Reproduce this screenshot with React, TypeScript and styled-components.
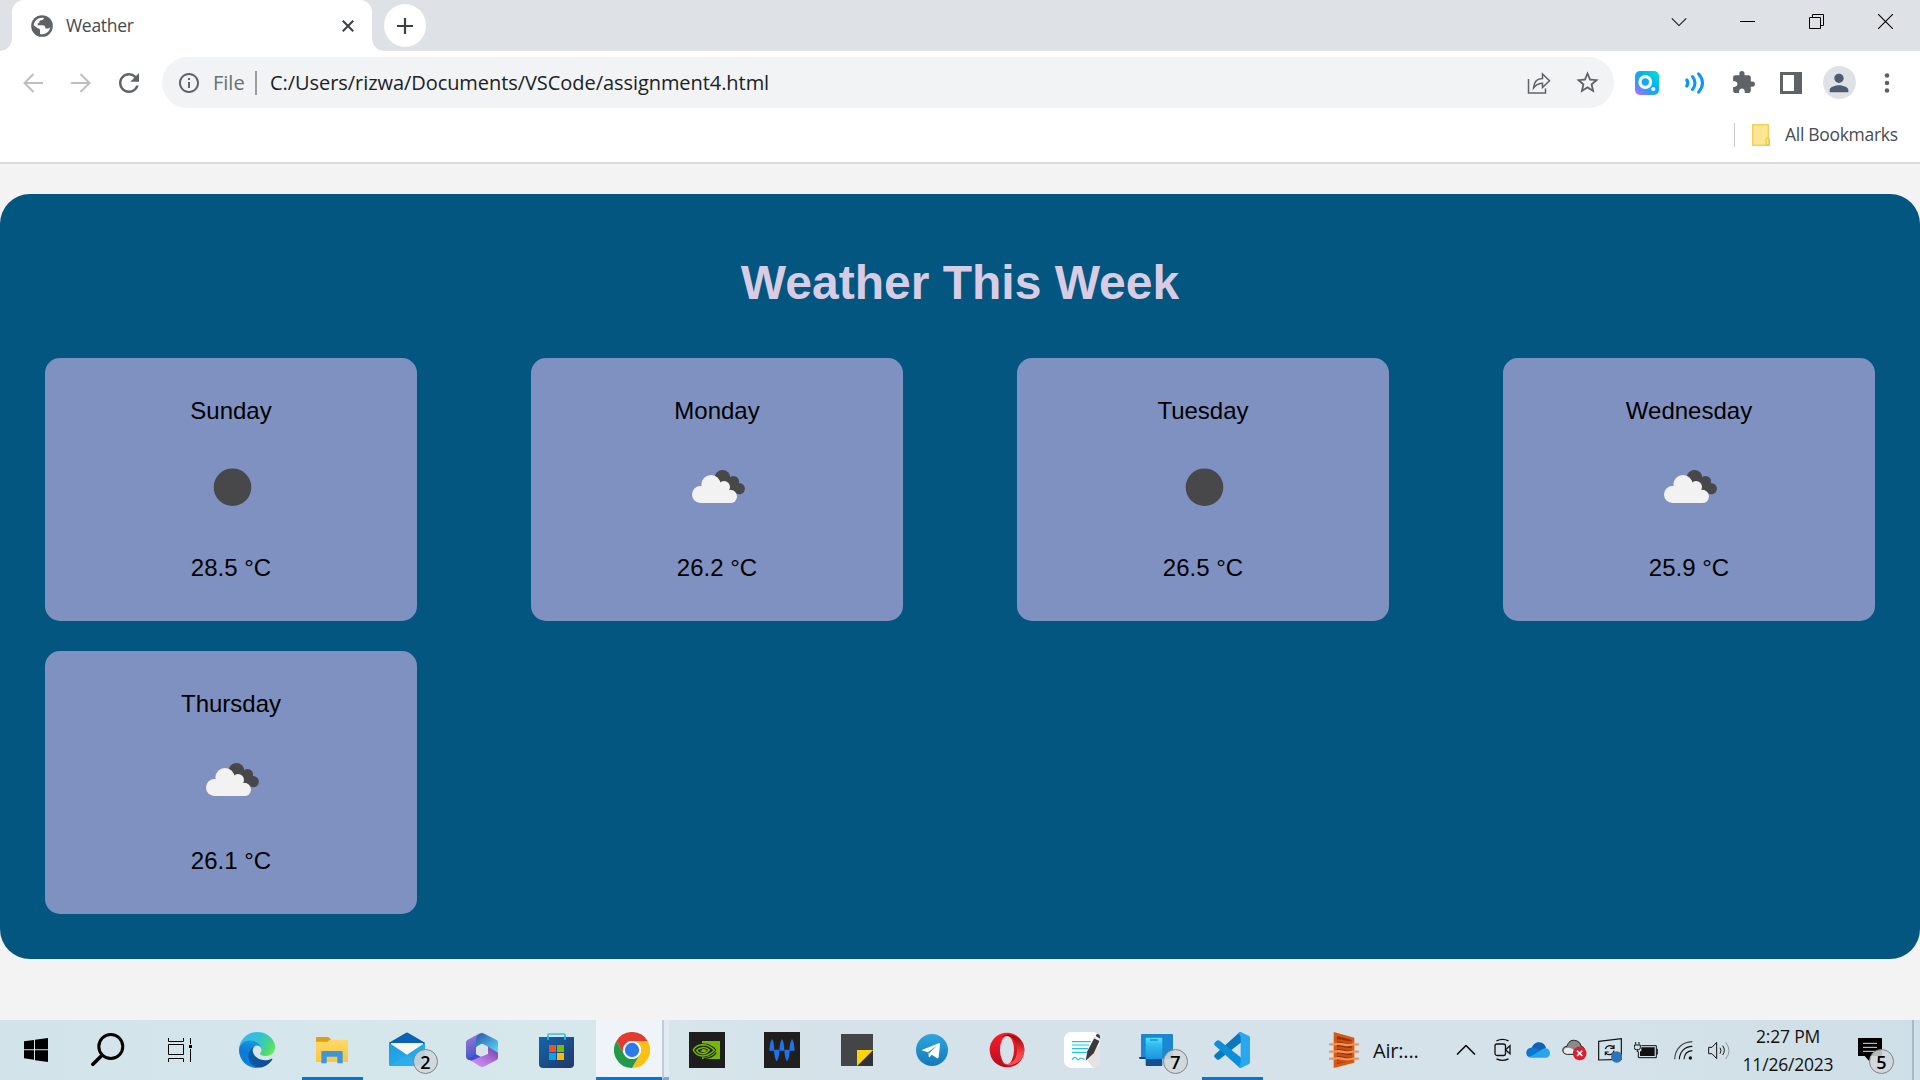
import React from "react";
import styled, { createGlobalStyle } from "styled-components";
import { MdExtension, MdInfoOutline, MdPerson, MdRefresh, MdStarBorder } from "react-icons/md";

const ui = `"Open Sans", "Noto Sans", sans-serif`;

const GlobalStyle = createGlobalStyle`
  *, *::before, *::after { box-sizing: border-box; }
  html, body { margin: 0; padding: 0; }
  body { overflow: hidden; font-family: ${ui}; }
  svg { display: block; flex: none; }
`;

const Screen = styled.div`
  width: 1920px;
  height: 1080px;
  display: flex;
  flex-direction: column;
  background: #f3f3f3;
`;

/* ---------- browser chrome ---------- */

const TabStrip = styled.header`
  height: 51px;
  flex: none;
  display: flex;
  align-items: flex-start;
  padding-left: 12px;
  background: #dee1e6;
`;

const Tab = styled.div`
  position: relative;
  width: 360px;
  height: 51px;
  display: flex;
  align-items: center;
  padding: 0 18px 0 19px;
  border-radius: 12px 12px 0 0;
  background: #fff;
  color: #45494d;

  &::before,
  &::after {
    content: "";
    position: absolute;
    bottom: 0;
    width: 12px;
    height: 12px;
  }
  &::before {
    left: -12px;
    background: radial-gradient(circle at 0 0, #dee1e6 11.5px, #fff 12px);
  }
  &::after {
    right: -12px;
    background: radial-gradient(circle at 100% 0, #dee1e6 11.5px, #fff 12px);
  }
`;

const TabTitle = styled.span`
  flex: 1;
  margin-left: 13px;
  padding-bottom: 2px;
  font-size: 17.5px;
  line-height: 24px;
  letter-spacing: -0.3px;
`;

const NewTab = styled.div`
  width: 42px;
  height: 43px;
  margin: 4px 0 0 12px;
  display: grid;
  place-items: center;
  border-radius: 50%;
  background: #fff;
`;

const WindowControls = styled.div`
  height: 43px;
  margin-left: auto;
  display: flex;
`;

const ControlCell = styled.div`
  width: 69px;
  display: grid;
  place-items: center;
`;

const Toolbar = styled.div`
  height: 63px;
  flex: none;
  display: flex;
  align-items: center;
  padding: 0 9px;
  background: #fff;
`;

const ToolCell = styled.div`
  width: 48px;
  height: 48px;
  display: grid;
  place-items: center;
  color: #5f6368;
`;

const Omnibox = styled.div`
  width: 1452px;
  height: 51px;
  margin: 0 9px;
  display: flex;
  align-items: center;
  padding: 0 3px 0 15px;
  border-radius: 26px;
  background: #f1f3f4;
  color: #5f6368;
`;

const Scheme = styled.span`
  width: 42px;
  margin-left: 12px;
  font-size: 20px;
  line-height: 28px;
  color: #6b6f73;
`;

const SchemeRule = styled.span`
  width: 2px;
  height: 24px;
  background: #9a9da1;
`;

const Url = styled.span`
  flex: 1;
  margin-left: 13px;
  font-size: 20px;
  line-height: 28px;
  letter-spacing: -0.06px;
  white-space: nowrap;
  color: #202124;
`;

const Avatar = styled.div`
  width: 33px;
  height: 33px;
  display: grid;
  place-items: center;
  border-radius: 50%;
  background: #dee1e6;
  color: #4f5b6e;
`;

const BookmarksBar = styled.div`
  height: 50px;
  flex: none;
  display: flex;
  justify-content: flex-end;
  align-items: center;
  padding: 0 21px 6px 0;
  border-bottom: 2px solid #d9dadb;
  background: #fff;
`;

const BookmarkRule = styled.span`
  width: 1px;
  height: 24px;
  margin-right: 17px;
  background: #c6c8ca;
`;

const BookmarkLabel = styled.span`
  width: 114px;
  margin-left: 15px;
  padding-bottom: 2px;
  font-size: 17.5px;
  line-height: 24px;
  letter-spacing: -0.3px;
  white-space: nowrap;
  color: #484c50;
`;

/* ---------- weather page ---------- */

const Page = styled.main`
  flex: 1;
  min-height: 0;
  padding-top: 30px;
  font-family: "Liberation Sans", Arial, sans-serif;
`;

const Forecast = styled.section`
  height: 765px;
  padding: 61px 45px 0;
  border-radius: 30px;
  background: #025680;
`;

const Title = styled.h1`
  margin: 0 0 48px;
  font-size: 48px;
  line-height: 55px;
  text-align: center;
  color: #d8cce4;
`;

const Days = styled.div`
  display: grid;
  grid-template-columns: repeat(4, 372px);
  justify-content: space-between;
  row-gap: 30px;
`;

const DayCard = styled.article`
  height: 263px;
  display: flex;
  flex-direction: column;
  align-items: center;
  padding-top: 39px;
  border-radius: 15px;
  background: #7f91c1;
  color: #000;
`;

const CardText = styled.p`
  margin: 0;
  font-size: 24px;
  line-height: 27px;
`;

const Sky = styled.div`
  width: 75px;
  height: 75px;
  margin: 26px 0 29px;
`;

/* ---------- taskbar ---------- */

const TaskbarRoot = styled.footer`
  height: 60px;
  flex: none;
  display: flex;
  background: linear-gradient(90deg, #d2e3ea 0%, #d4e5eb 12%, #d7e8ec 28%, #d5e2e9 45%, #d5e2e9 80%, #cfdfe7 100%);
`;

const SystemCell = styled.div<{ $w: number }>`
  width: ${(p) => p.$w}px;
  display: grid;
  place-items: center;
`;

const AppCell = styled.div<{ $open?: boolean }>`
  position: relative;
  width: 75px;
  display: grid;
  place-items: center;

  &::after {
    content: "";
    display: ${(p) => (p.$open ? "block" : "none")};
    position: absolute;
    left: 8px;
    bottom: 0;
    width: 61px;
    height: 3px;
    background: #0078d7;
  }
`;

const ActiveCell = styled.div`
  width: 75px;
  display: flex;
  padding-left: 2px;
`;

const ActiveFace = styled.div`
  width: 66px;
  display: grid;
  place-items: center;
  padding-left: 6px;
  border-bottom: 3px solid #0078d7;
  background: #eef4f7;
  & > svg { margin-top: 3px; }
`;

const ActiveStack = styled.div`
  width: 7px;
  border-left: 2px solid #bfcdd6;
  border-bottom: 3px solid #76aee2;
  background: #e1ebf1;
`;

const Count = styled.span<{ $x: number }>`
  position: absolute;
  left: ${(p) => p.$x}px;
  top: 29px;
  width: 25px;
  height: 25px;
  display: grid;
  place-items: center;
  border: 1px solid #7c8489;
  border-radius: 50%;
  background: rgba(211, 214, 216, 0.88);
  font-size: 18px;
  font-weight: 600;
  line-height: 20px;
  color: #000;
`;

const Tray = styled.div`
  flex: 1;
  display: flex;
  align-items: center;
  padding-left: 60px;
`;

const NewsLabel = styled.span`
  width: 84px;
  padding: 2px 0 0 14px;
  font-size: 20px;
  line-height: 28px;
  letter-spacing: -0.2px;
  color: #111;
`;

const Clock = styled.div`
  width: 108px;
  font-size: 17.5px;
  line-height: 28px;
  letter-spacing: -0.2px;
  text-align: center;
  white-space: nowrap;
  color: #111;
`;

const NoticeCell = styled.div`
  position: relative;
  width: 70px;
  height: 60px;
  padding: 18px 0 0 16px;
`;

const ShowDesktop = styled.div`
  height: 60px;
  width: 8px;
  border-left: 2px solid #a9b8c2;
`;

/* ---------- icons ---------- */

const Globe = () => (
  <svg width="22" height="22" viewBox="0 0 66 66">
    <circle cx="33" cy="33" r="32.5" fill="#5f6368" />
    <path fill="#fff" d="M8 31C9 18 20 8 33 8c2 0 4 .3 6 .8-1 5-5 7-10 7-3 0-4 3-4 6 0 2-2 3-5 3v6h15c6 0 9 4 8 10h8c4 0 6-3 7-6C57 47 48 57 34 58c-3 0-6-.2-7-1V47c0-5-3-7-7-7z" />
  </svg>
);

const Cross = () => (
  <svg width="12" height="12" viewBox="0 0 12 12" stroke="#3c4043" strokeWidth="2">
    <path d="M.8.8l10.4 10.4M11.2.8L.8 11.2" />
  </svg>
);

const Plus = () => (
  <svg width="16" height="16" viewBox="0 0 16 16" stroke="#3c4043" strokeWidth="2.2">
    <path d="M8 0v16M0 8h16" />
  </svg>
);

const Arrow = ({ flip }: { flip?: boolean }) => (
  <svg width="20" height="20" viewBox="0 0 20 20" fill="none" stroke="#bdbec0" strokeWidth="2"
    transform={flip ? "scale(-1 1)" : undefined}>
    <path d="M20 10H2M10.5 1L1.5 10l9 9" />
  </svg>
);

const Share = () => (
  <svg width="24" height="24" viewBox="0 0 24 24" fill="none" stroke="#5f6368" strokeWidth="1.5">
    <path d="M1.5 8v14h17v-4.5" />
    <path d="M6.5 17c.5-6 4-9.500 9-9.500V3l7 6.800-7 6.700v-4.300c-4 0-6.500 1.500-9 4.800z" />
  </svg>
);

const QSearch = () => (
  <svg width="24" height="24" viewBox="0 0 24 24">
    <defs>
      <linearGradient id="qs" x1="0" y1="1" x2=".9" y2="0">
        <stop offset="0" stopColor="#d65cff" />
        <stop offset=".35" stopColor="#2f9bff" />
        <stop offset=".65" stopColor="#00b4f5" />
        <stop offset="1" stopColor="#00e0d0" />
      </linearGradient>
    </defs>
    <rect width="24" height="24" rx="5" fill="url(#qs)" />
    <circle cx="10.3" cy="11" r="5.3" fill="none" stroke="#fff" strokeWidth="3.2" />
    <circle cx="18.3" cy="18" r="2.1" fill="#fff" />
  </svg>
);

const Waves = () => (
  <svg width="20" height="22" viewBox="0 0 20 22" fill="none" stroke="#0a95ff" strokeLinecap="round">
    <path strokeWidth="3.2" d="M1.800 8q2 3 0 6" />
    <path strokeWidth="3" d="M7.500 4.500q5 6.500 0 13" />
    <path strokeWidth="3" d="M13.500 1.800q8 9.200 0 18.400" />
  </svg>
);

const SidePanel = () => (
  <svg width="22" height="22" viewBox="0 0 22 22">
    <path fill="#5f6368" fillRule="evenodd" d="M0 0h22v22H0zM3 3v16h11V3z" />
  </svg>
);

const Dots = () => (
  <svg width="6" height="20" viewBox="0 0 6 20" fill="#5f6368">
    <circle cx="3" cy="2.5" r="2.3" />
    <circle cx="3" cy="10" r="2.3" />
    <circle cx="3" cy="17.5" r="2.3" />
  </svg>
);

const Folder = () => (
  <svg width="18" height="22" viewBox="0 0 18 22">
    <path d="M.7.7h15.600v14.500h1v6H.7z" fill="#ffe692" stroke="#f3cf55" strokeWidth="1.4" />
    <path d="M14 21v-5.500q0-1.300 1.500-1.300t1.500 1.300V21z" fill="#ffe692" stroke="#e5bd3c" strokeWidth="1" />
  </svg>
);

const NewMoon = () => (
  <svg width="75" height="75" viewBox="0 0 75 75">
    <circle cx="38.5" cy="37.2" r="18.8" fill="#48484a" />
  </svg>
);

const BrokenClouds = () => (
  <svg width="75" height="75" viewBox="0 0 75 75">
    <g fill="#48484a">
      <circle cx="42.5" cy="27.7" r="7.8" />
      <circle cx="53.5" cy="31.5" r="5.6" />
      <circle cx="59.3" cy="38.7" r="5.6" />
      <path d="M40 24l14 5 8 9-3 6-12-4z" />
    </g>
    <g fill="#f2f2f2">
      <circle cx="31" cy="34.5" r="9.6" />
      <circle cx="20.5" cy="44.5" r="8.5" />
      <circle cx="44" cy="37" r="6" />
      <circle cx="50.3" cy="46.4" r="6.7" />
      <path d="M20.500 40l10-8 14 3 6 8v10h-30z" />
    </g>
  </svg>
);

const Start = () => (
  <svg width="24" height="24" viewBox="0 0 72 72">
    <path d="M0 10l30-4v28H0zM33 5.500L72 0v34H33zM0 37h30v28L0 61zM33 37h39v35l-39-5.500z" />
  </svg>
);

const Search = () => (
  <svg width="34" height="34" viewBox="0 0 34 34" fill="none" stroke="#000" strokeLinecap="round">
    <circle cx="19.8" cy="13.5" r="12" strokeWidth="3" />
    <path d="M10.800 22.500L1.900 31.300" strokeWidth="3.6" />
  </svg>
);

const TaskView = () => (
  <svg width="24" height="24" viewBox="0 0 24 24" fill="none" stroke="#000" strokeWidth="1">
    <path d="M.5 0v3.500h15V0M.5 24v-3.500h15V24M.5 6.500h15v10H.5zM22.500 0v6M22.500 11v13" />
    <path d="M21 7h3v3h-3z" fill="#000" stroke="none" />
  </svg>
);

const Edge = () => (
  <svg width="36" height="36" viewBox="0 0 256 256">
    <defs>
      <linearGradient id="ed1" x1=".2" y1=".5" x2="1" y2=".5">
        <stop offset="0" stopColor="#0c59a4" />
        <stop offset="1" stopColor="#114a8b" />
      </linearGradient>
      <linearGradient id="ed2" x1=".6" y1="0" x2=".3" y2="1">
        <stop offset="0" stopColor="#1b9de2" />
        <stop offset=".5" stopColor="#0a7ad8" />
        <stop offset="1" stopColor="#0b82dc" />
      </linearGradient>
      <linearGradient id="ed3" x1="0" y1=".3" x2="1" y2=".75">
        <stop offset="0" stopColor="#35b8f0" />
        <stop offset=".45" stopColor="#33c3d4" />
        <stop offset=".8" stopColor="#4bd77d" />
        <stop offset="1" stopColor="#66eb55" />
      </linearGradient>
    </defs>
    <path fill="url(#ed1)" d="M231 190.500c-3.400 1.800-6.900 3.400-10.500 4.700a101.500 101.500 0 0 1-35.500 6.400c-46.800 0-87.600-32.200-87.600-73.500.1-11.400 6.400-21.900 16.400-27.300-42.300 1.800-53.200 45.900-53.200 71.700 0 73 67.300 80.400 81.800 80.400 7.800 0 19.600-2.300 26.700-4.500l1.300-.4a128.300 128.300 0 0 0 66.600-52.800 4 4 0 0 0-6-4.700z" />
    <path fill="url(#ed2)" d="M105.700 241.400a79.200 79.200 0 0 1-22.700-21.300 80.700 80.700 0 0 1 29.500-120c3.200-1.500 8.500-4.100 15.600-4 10.100.1 19.700 4.900 25.700 13 4 5.400 6.300 11.900 6.400 18.700 0-.2 24.500-79.600-80-79.600-43.900 0-80 41.700-80 78.200-.2 19.300 4 38.500 12.100 56a128 128 0 0 0 156.400 67 75.500 75.500 0 0 1-63-8z" />
    <path fill="url(#ed3)" d="M152.300 148.900c-.8 1-3.300 2.500-3.300 5.700 0 2.600 1.700 5.200 4.800 7.300 14.400 10.100 41.700 8.700 41.800 8.700 10.700 0 21.200-2.900 30.400-8.300a61.800 61.800 0 0 0 30.400-53.200c.3-22.400-8-37.300-11.300-43.900C223.900 23.900 177.700 0 127.400 0A128 128 0 0 0 0 126.200c.5-36.500 36.800-66 80-66 3.500 0 23.500.3 42 10.100 16.300 8.600 24.900 18.900 30.800 29.200 6.200 10.700 7.300 24.100 7.300 29.500s-2.700 13.300-7.800 19.900z" />
  </svg>
);

const Explorer = () => (
  <svg width="36" height="36" viewBox="0 0 108 108">
    <defs>
      <linearGradient id="ex" x1="0" y1="0" x2="0" y2="1">
        <stop offset="0" stopColor="#ffd968" />
        <stop offset="1" stopColor="#fcc63c" />
      </linearGradient>
    </defs>
    <path fill="#e0a00c" d="M6 18q0-3 3-3h32q3 0 5 2l6 7-10 10H6z" />
    <path fill="url(#ex)" d="M6 29h35l6-6h52q3 0 3 3v61q0 3-3 3H9q-3 0-3-3z" />
    <path fill="#3a96dd" d="M22 60q0-3 3-3h58q3 0 3 3v34H70V74H38v20H22z" />
  </svg>
);

const Mail = () => (
  <svg width="36" height="36" viewBox="0 0 108 108">
    <defs>
      <linearGradient id="ml" x1="0" y1="0" x2="1" y2="1">
        <stop offset="0" stopColor="#1e9be3" />
        <stop offset="1" stopColor="#28b2ee" />
      </linearGradient>
    </defs>
    <path fill="#0a62b8" d="M0 32L50 3q4-3 8 0l50 29v20H0z" />
    <path fill="#f7f7f7" d="M6 33h96v20L54 80 6 55z" />
    <path fill="url(#ml)" d="M0 32l54 36 54-36v66q0 4-4 4H4q-4 0-4-4z" />
    <path fill="#4cb9ef" d="M0 101l54-33 54 33z" opacity=".25" />
  </svg>
);

const Office = () => (
  <svg width="36" height="36" viewBox="0 0 108 108">
    <defs>
      <linearGradient id="of1" x1="0" y1="0" x2=".3" y2="1">
        <stop offset="0" stopColor="#b07be0" />
        <stop offset="1" stopColor="#3c55c8" />
      </linearGradient>
      <linearGradient id="of2" x1="0" y1="0" x2="1" y2="1">
        <stop offset="0" stopColor="#2b55a8" />
        <stop offset="1" stopColor="#55e0fa" />
      </linearGradient>
      <linearGradient id="of3" x1="0" y1="1" x2="1" y2="0">
        <stop offset="0" stopColor="#d8a0fa" />
        <stop offset=".5" stopColor="#b070dc" />
        <stop offset="1" stopColor="#6b3a98" />
      </linearGradient>
    </defs>
    <path fill="url(#of3)" d="M12 80l38-6 22-8V40l30 20v17q0 4-4 7L62 103q-8 4-15 0z" />
    <path fill="url(#of1)" d="M6 31q0-5 4-7L47 4q7-3 12-1L36 22v46l4 6-18 9q-8 3-13-2-3-3-3-8z" />
    <path fill="#3d4fd0" d="M36 67l14 7-22 10q-9 3-16-2z" />
    <path fill="url(#of2)" d="M36 22Q36 14 42 10l8-5q5-3 11 0l37 19q4 2 4 7v31L72 44 54 35 36 46z" />
    <path fill="#d6e4ea" d="M39 46q0-3 3-5l9-4q3-2 6 0l10 5q3 2 3 5v14q0 3-3 5l-9 5q-4 2-7 0l-9-5q-3-2-3-5z" />
  </svg>
);

const Store = () => (
  <svg width="36" height="36" viewBox="0 0 108 108">
    <defs>
      <linearGradient id="st" x1="0" y1="0" x2="1" y2="1">
        <stop offset="0" stopColor="#1266ad" />
        <stop offset="1" stopColor="#233768" />
      </linearGradient>
    </defs>
    <path fill="none" stroke="#2fc0ef" strokeWidth="5" d="M27 24V9q0-3 3-3h45q3 0 3 3v15" />
    <path fill="url(#st)" d="M0 15h105v81q0 12-12 12H12Q0 108 0 96z" />
    <path fill="none" stroke="#2fc0ef" strokeWidth="5" d="M27 23V12M78 23V12" />
    <path fill="#f25022" d="M30 39h21v21H30z" />
    <path fill="#7fba00" d="M54 39h21v21H54z" />
    <path fill="#00a4ef" d="M30 63h21v21H30z" />
    <path fill="#ffb900" d="M54 63h21v21H54z" />
  </svg>
);

const chromeArm = "M54 27H100.800A54 54 0 0 0 7.200 27L30.600 67.500A27 27 0 0 1 54 27z";

const Chrome = () => (
  <svg width="36" height="36" viewBox="0 0 108 108">
    <circle cx="54" cy="54" r="28" fill="#fff" />
    <path fill="#e33b2e" d={chromeArm} />
    <path fill="#fcc012" d={chromeArm} transform="rotate(120 54 54)" />
    <path fill="#229a49" d={chromeArm} transform="rotate(240 54 54)" />
    <circle cx="54" cy="54" r="27" fill="#fff" />
    <circle cx="54" cy="54" r="21.5" fill="#2b7bec" />
  </svg>
);

const Nvidia = () => (
  <svg width="36" height="36" viewBox="0 0 108 108">
    <path fill="#1e1e1e" d="M0 0h108v108H0z" />
    <path fill="#76b900" d="M39 27h54v54H39z" />
    <path fill="#1e1e1e" d="M39 34c22 0 36 11 43 20-7 12-22 22-43 22z" />
    <g fill="none" stroke="#76b900" strokeWidth="4.5">
      <path d="M40 38C26 39 16 47 13 54c5 11 15 18 29 18 14 0 25-8 34-17-8-9-19-17-36-17z" />
      <path d="M40 47c-8 1-14 4-17 8 4 7 10 10 19 10 8 0 14-5 19-11-5-5-11-8-21-7z" />
    </g>
    <path fill="#76b900" d="M40 51c7-1 12 2 14 4-3 4-7 7-12 6-5-1-8-3-9-6 3 1 6 2 7-4z" />
    <path fill="none" stroke="#1e1e1e" strokeWidth="4" d="M82 62C74 72 60 80 44 79" />
  </svg>
);

const WaveApp = () => (
  <svg width="36" height="36" viewBox="0 0 108 108">
    <path fill="#201f1e" d="M0 0h108v108H0z" />
    <g fill="#1f74ea">
      <path d="M16 56C17 38 20 26 24 21c5 6 6 18 7 35zM46 56c1-18 4-30 8-35 5 6 6 18 7 35zM76 56c1-18 4-30 8-35 5 6 7 18 8 35z" />
      <path d="M30 53h16c0 18-4 29-8 35-5-6-7-17-8-35zM61 53h16c0 18-4 29-8 35-5-6-7-17-8-35z" />
    </g>
  </svg>
);

const Sticky = () => (
  <svg width="36" height="36" viewBox="0 0 108 108">
    <path fill="#444546" d="M6 6h96v48l-48 48H6z" />
    <path fill="#303132" d="M102 54v48H54z" />
    <path fill="#ffd400" d="M54 54h48l-48 48z" />
  </svg>
);

const Telegram = () => (
  <svg width="36" height="36" viewBox="0 0 108 108">
    <defs>
      <linearGradient id="tg" x1="0" y1="0" x2="0" y2="1">
        <stop offset="0" stopColor="#2fa5df" />
        <stop offset="1" stopColor="#117ab8" />
      </linearGradient>
    </defs>
    <circle cx="54" cy="54" r="48" fill="url(#tg)" />
    <path fill="#fff" d="M25 53l49-19q5-1 4 4l-4 38q-2 5-6 2L54 68l-7 7q-3 2-3-2l-3-13-15-4q-4-1-1-3z" />
    <path fill="#3d93c8" d="M42 60l26-18-22 22-1 10z" />
  </svg>
);

const Opera = () => (
  <svg width="36" height="36" viewBox="0 0 108 108">
    <defs>
      <linearGradient id="op" x1="0" y1="0" x2="0" y2="1">
        <stop offset="0" stopColor="#ff1b2d" />
        <stop offset="1" stopColor="#b50d20" />
      </linearGradient>
      <linearGradient id="op2" x1="0" y1="0" x2="0" y2="1">
        <stop offset="0" stopColor="#9c0000" />
        <stop offset=".7" stopColor="#ff4b4b" />
      </linearGradient>
    </defs>
    <circle cx="54" cy="54" r="52" fill="url(#op)" />
    <path fill="url(#op2)" d="M38 15c10-7 20-10 32-6 22 7 36 24 36 45S92 92 70 99c-12 4-22 0-32-8 30 8 46-6 46-37S66 6 38 15z" />
    <ellipse cx="54" cy="54" rx="21" ry="42" fill="#d5e2e9" />
  </svg>
);

const Notes = () => (
  <svg width="36" height="36" viewBox="0 0 108 108">
    <rect width="108" height="108" rx="22" fill="#fff" />
    <path fill="#dcdcdc" d="M68 82l40-46v50q0 22-22 20z" opacity=".8" />
    <g fill="none" stroke="#1cc3ea" strokeWidth="3.5">
      <path d="M24 29h56M24 39h52M24 50h48M24 61h44M24 84c6-10 11-10 15-3s8-3 11-3 6 4 12 3" />
    </g>
    <path fill="#3b3b3d" d="M65 86l5-28 22-42 16 8-19 40z" />
    <path stroke="#fff" strokeWidth="4" d="M91 17l18 9" />
    <path fill="#3b3b3d" d="M95 12l4-7q9 2 9 8v7z" />
  </svg>
);

const Phone = () => (
  <svg width="36" height="36" viewBox="0 0 108 108">
    <defs>
      <linearGradient id="ph" x1="0" y1="0" x2="0" y2="1">
        <stop offset="0" stopColor="#4fe3fb" />
        <stop offset=".25" stopColor="#32bdf0" />
        <stop offset=".75" stopColor="#1d94dc" />
        <stop offset=".76" stopColor="#14508f" />
      </linearGradient>
    </defs>
    <rect x="6" y="6" width="96" height="74" rx="3" fill="#1a87d0" />
    <path fill="#12467f" d="M0 75h60v6H3q-3 0-3-6z" />
    <rect x="20" y="17" width="50" height="85" rx="3" fill="url(#ph)" />
    <path stroke="#1b86c8" strokeWidth="4" d="M33 24h23" />
  </svg>
);

const VSCode = () => (
  <svg width="36" height="36" viewBox="0 0 108 108">
    <path fill="#0a78bb" d="M2 68q-3 4 0 8l6 6q4 3 9 0L82 31V0q-4-1-8 3z" />
    <path fill="#0b8fd8" d="M2 40q-3-4 0-8l6-6q4-3 9 0l65 51v31q-4 1-8-3z" />
    <path fill="#27a8f1" d="M80 0l24 11q4 2 4 6v74q0 4-4 6l-24 11q-4 1-6-3l6-12V15l-6-12q2-4 6-3z" />
  </svg>
);

const AirQuality = () => (
  <svg width="30" height="36" viewBox="0 0 90 108">
    <path fill="#d9580f" d="M14 0l62 17v75L14 108z" />
    <path fill="#8a3208" d="M24 12l44 12v62L24 96z" />
    <path fill="none" stroke="#c94f0e" strokeWidth="8" d="M24 27c16-5 26 9 44 3M24 48c16-5 26 9 44 3M24 69c16-5 26 9 44 3M24 90c16-5 26 0 44-6" />
    <path fill="none" stroke="#f2915b" strokeWidth="7" strokeLinecap="round" d="M3 37h14c22-6 32 8 54 0h16M3 59h14c22-6 32 8 54 0h16M3 80h14c22-6 32 8 54 0h16" />
  </svg>
);

const Chevron = ({ down }: { down?: boolean }) => (
  <svg width={down ? 16 : 20} height="10" viewBox="0 0 20 10" fill="none" stroke="#111" strokeWidth={down ? 1.3 : 1.6}>
    <path d={down ? "M1 0.500l9 9 9-9" : "M1 9.500l9-9 9 9"} />
  </svg>
);

const MeetNow = () => (
  <svg width="18" height="24" viewBox="0 0 18 24" fill="none" stroke="#111" strokeWidth="1.3">
    <rect x="1" y="6" width="10.5" height="11.5" rx="2" />
    <path d="M11.500 11.800l4.500-4v8z" />
    <path d="M2.500 2.800q6-3 12 0M2.500 20.800q6 3 12 0" />
  </svg>
);

const OneDrive = () => (
  <svg width="24" height="16" viewBox="0 0 72 48">
    <path fill="#0f62b5" d="M16 22C20 6 30 0 40 1c11 1 18 8 20 17L40 34z" />
    <path fill="#0a78d1" d="M15 17c12-2 18 3 32 13L10 46C-3 42-3 19 15 17z" />
    <path fill="#28a4ea" d="M10 46l32-20c6-5 12-8 18-7 16 2 16 28-1 28H16q-3 0-6-1z" />
  </svg>
);

const CloudError = () => (
  <svg width="26" height="22" viewBox="0 0 78 66">
    <path fill="#8a8a8a" stroke="#222" strokeWidth="3" d="M15 22C19 8 27 3 37 4c12 1 18 8 20 17q9 2 11 12L40 46H16C-2 46-2 22 15 22z" />
    <path fill="#e9ebec" d="M12 27c14-3 18 3 30 10l-8 7H14C2 42 4 28 12 27z" />
    <circle cx="53" cy="43" r="20.5" fill="#dc1f2e" />
    <path stroke="#fff" strokeWidth="5" d="M45 35l16 16M61 35L45 51" />
  </svg>
);

const Update = () => (
  <svg width="24" height="25" viewBox="0 0 72 75" fill="none" stroke="#111" strokeWidth="3.5">
    <path d="M2 10l68-8v62L2 66z" />
    <path d="M22 33q4-10 14-10 8 0 11 6M48 21v10H37M48 38q-3 12-14 12-8 0-11-6M22 52V42h10" />
    <circle cx="56" cy="57" r="17" fill="#2d73ba" stroke="none" />
  </svg>
);

const Battery = () => (
  <svg width="24" height="17" viewBox="0 0 72 51" fill="none" stroke="#111" strokeWidth="3">
    <path d="M22 11h45v36H13V28M67 22h4v14h-4" />
    <path fill="#111" stroke="none" d="M22 16h40v26H18V28h4z" />
    <path d="M5 0v8M15 0v8M1 9h18v8q0 6-6 6H7q-6 0-6-6zM10 23v7" />
  </svg>
);

const Wifi = () => (
  <svg width="19" height="19" viewBox="0 0 57 57" fill="none" stroke="#111" strokeWidth="3.3">
    <path d="M2 55C3 24 24 3 55 2" stroke="#444" />
    <path d="M16 55c1-23 16-38 39-39" />
    <path d="M30 55c1-15 10-25 25-26" />
    <circle cx="49" cy="51" r="5" fill="#111" stroke="none" />
  </svg>
);

const Speaker = () => (
  <svg width="22" height="19" viewBox="0 0 66 57" fill="none" stroke="#111" strokeWidth="3">
    <path d="M2 19h10L26 4v49L12 38H2z" />
    <path d="M36 20q6 9 0 18M44 14q10 14 0 28" />
    <path d="M53 4q20 25 0 50" stroke="#8b959b" />
  </svg>
);

const Notice = () => (
  <svg width="24" height="24" viewBox="0 0 72 72">
    <path d="M0 0h72v54H36v18L20 54H0z" />
    <path d="M15 16h42M15 28h42M15 40h42" stroke="#d5e2e9" strokeWidth="3" />
  </svg>
);

/* ---------- data ---------- */

type Day = { name: string; temp: string; sky: "clear" | "clouds" };

const days: Day[] = [
  { name: "Sunday", temp: "28.5", sky: "clear" },
  { name: "Monday", temp: "26.2", sky: "clouds" },
  { name: "Tuesday", temp: "26.5", sky: "clear" },
  { name: "Wednesday", temp: "25.9", sky: "clouds" },
  { name: "Thursday", temp: "26.1", sky: "clouds" },
];

type AppEntry = { id: string; Icon: () => React.ReactElement; open?: boolean; active?: boolean; count?: number };

const apps: AppEntry[] = [
  { id: "edge", Icon: Edge },
  { id: "explorer", Icon: Explorer, open: true },
  { id: "mail", Icon: Mail, count: 2 },
  { id: "office", Icon: Office },
  { id: "store", Icon: Store },
  { id: "chrome", Icon: Chrome, active: true },
  { id: "nvidia", Icon: Nvidia },
  { id: "wave", Icon: WaveApp },
  { id: "sticky", Icon: Sticky },
  { id: "telegram", Icon: Telegram },
  { id: "opera", Icon: Opera },
  { id: "notes", Icon: Notes },
  { id: "phone", Icon: Phone, count: 7 },
  { id: "vscode", Icon: VSCode, open: true },
];

const BrowserChrome = () => (
  <>
    <TabStrip>
      <Tab>
        <Globe />
        <TabTitle>Weather</TabTitle>
        <Cross />
      </Tab>
      <NewTab><Plus /></NewTab>
      <WindowControls>
        <ControlCell><Chevron down /></ControlCell>
        <ControlCell>
          <svg width="15" height="1" viewBox="0 0 15 1"><path d="M0 0h15v1H0z" /></svg>
        </ControlCell>
        <ControlCell>
          <svg width="15" height="15" viewBox="0 0 15 15" fill="none" stroke="#000">
            <path d="M.5 3.500h11v11H.5zM3.500 3V.5h11v11H12" />
          </svg>
        </ControlCell>
        <ControlCell>
          <svg width="15" height="15" viewBox="0 0 15 15" stroke="#000" strokeWidth="1.1">
            <path d="M0 0l15 15M15 0L0 15" />
          </svg>
        </ControlCell>
      </WindowControls>
    </TabStrip>
    <Toolbar>
      <ToolCell><Arrow /></ToolCell>
      <ToolCell><Arrow flip /></ToolCell>
      <ToolCell><MdRefresh size={30} /></ToolCell>
      <Omnibox>
        <MdInfoOutline size={24} />
        <Scheme>File</Scheme>
        <SchemeRule />
        <Url>C:/Users/rizwa/Documents/VSCode/assignment4.html</Url>
        <ToolCell><Share /></ToolCell>
        <ToolCell><MdStarBorder size={27} /></ToolCell>
      </Omnibox>
      <ToolCell><QSearch /></ToolCell>
      <ToolCell><Waves /></ToolCell>
      <ToolCell><MdExtension size={25} /></ToolCell>
      <ToolCell><SidePanel /></ToolCell>
      <ToolCell><Avatar><MdPerson size={28} /></Avatar></ToolCell>
      <ToolCell><Dots /></ToolCell>
    </Toolbar>
    <BookmarksBar>
      <BookmarkRule />
      <Folder />
      <BookmarkLabel>All Bookmarks</BookmarkLabel>
    </BookmarksBar>
  </>
);

const Taskbar = () => (
  <TaskbarRoot>
    <SystemCell $w={72}><Start /></SystemCell>
    <SystemCell $w={72}><Search /></SystemCell>
    <SystemCell $w={72}><TaskView /></SystemCell>
    <SystemCell $w={3} />
    {apps.map(({ id, Icon, open, active, count }) =>
      active ? (
        <ActiveCell key={id}>
          <ActiveFace><Icon /></ActiveFace>
          <ActiveStack />
        </ActiveCell>
      ) : (
        <AppCell key={id} $open={open}>
          <Icon />
          {count !== undefined && <Count $x={44}>{count}</Count>}
        </AppCell>
      )
    )}
    <Tray>
      <AirQuality />
      <NewsLabel>Air:...</NewsLabel>
      <SystemCell $w={46}><Chevron /></SystemCell>
      <SystemCell $w={28}><MeetNow /></SystemCell>
      <SystemCell $w={42}><OneDrive /></SystemCell>
      <SystemCell $w={32}><CloudError /></SystemCell>
      <SystemCell $w={38}><Update /></SystemCell>
      <SystemCell $w={34}><Battery /></SystemCell>
      <SystemCell $w={40}><Wifi /></SystemCell>
      <SystemCell $w={31}><Speaker /></SystemCell>
      <Clock>
        <div>2:27 PM</div>
        <div>11/26/2023</div>
      </Clock>
      <NoticeCell>
        <Notice />
        <Count $x={27}>5</Count>
      </NoticeCell>
      <ShowDesktop />
    </Tray>
  </TaskbarRoot>
);

export default function App() {
  return (
    <Screen>
      <GlobalStyle />
      <BrowserChrome />
      <Page>
        <Forecast>
          <Title>Weather This Week</Title>
          <Days>
            {days.map((d) => (
              <DayCard key={d.name}>
                <CardText>{d.name}</CardText>
                <Sky>{d.sky === "clear" ? <NewMoon /> : <BrokenClouds />}</Sky>
                <CardText>{d.temp} °C</CardText>
              </DayCard>
            ))}
          </Days>
        </Forecast>
      </Page>
      <Taskbar />
    </Screen>
  );
}
